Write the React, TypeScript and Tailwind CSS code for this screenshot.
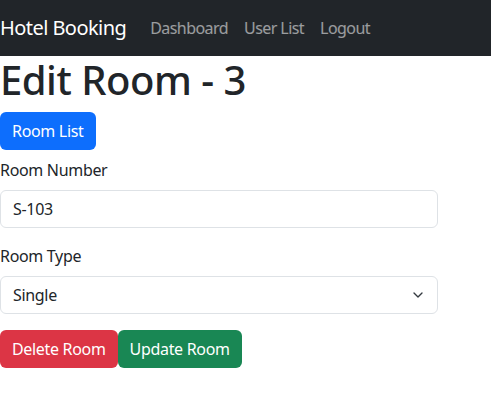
import { ChevronDown } from "lucide-react";

const font = { fontFamily: '"Noto Sans", "Open Sans", Arial, sans-serif' };

export default function App() {
  return (
    <div className="min-h-screen bg-white tracking-[-0.02em] text-[#212529]" style={font}>
      <nav className="flex h-14 items-center bg-[#212529] tracking-[-0.035em]">
        <a className="mr-4 text-[20px] leading-[30px] text-white">Hotel Booking</a>
        <ul className="flex text-base leading-6 text-white/55">
          <li className="px-2">Dashboard</li>
          <li className="px-2">User List</li>
          <li className="px-2">Logout</li>
        </ul>
      </nav>

      <h1 className="mb-2 text-[40px] font-medium leading-[48px] tracking-[-0.012em]">Edit Room - 3</h1>
      <button className="h-[38px] rounded-md bg-[#0d6efd] px-3 text-base text-white">Room List</button>

      <form className="mt-2 w-[438px]">
        <div className="mb-4">
          <label className="mb-2 block text-base leading-6">Room Number</label>
          <input
            className="block h-[38px] w-full rounded-md border border-[#dee2e6] px-3 text-base outline-none"
            defaultValue="S-103"
          />
        </div>
        <div className="mb-4">
          <label className="mb-2 block text-base leading-6">Room Type</label>
          <div className="relative">
            <select
              className="block h-[38px] w-full appearance-none rounded-md border border-[#dee2e6] bg-white px-3 text-base outline-none"
              defaultValue="Single"
            >
              <option>Single</option>
              <option>Double</option>
              <option>Suite</option>
            </select>
            <ChevronDown className="pointer-events-none absolute right-3 top-[11px] h-4 w-4 text-[#343a40]" strokeWidth={2} />
          </div>
        </div>
        <div className="flex">
          <button type="button" className="h-[38px] rounded-md bg-[#dc3545] px-3 text-base text-white">
            Delete Room
          </button>
          <button type="button" className="h-[38px] rounded-md bg-[#198754] px-3 text-base text-white">
            Update Room
          </button>
        </div>
      </form>
    </div>
  );
}
